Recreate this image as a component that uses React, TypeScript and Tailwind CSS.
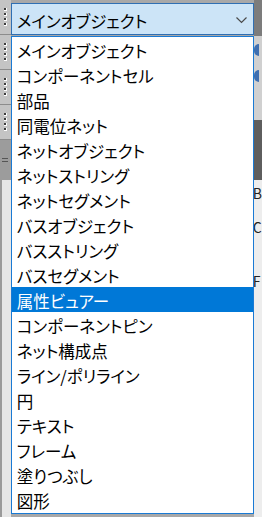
import React from "react";

const items = [
  "メインオブジェクト",
  "コンポーネントセル",
  "部品",
  "同電位ネット",
  "ネットオブジェクト",
  "ネットストリング",
  "ネットセグメント",
  "バスオブジェクト",
  "バスストリング",
  "バスセグメント",
  "属性ビュアー",
  "コンポーネントピン",
  "ネット構成点",
  "ライン/ポリライン",
  "円",
  "テキスト",
  "フレーム",
  "塗りつぶし",
  "図形",
];

const font = {
  fontFamily: '"Noto Sans CJK JP", "Noto Sans", sans-serif',
  fontFeatureSettings: '"palt"',
};

function Grip() {
  return (
    <div className="flex flex-col gap-[2px] items-center pt-[8px]">
      {[0, 1, 2, 3].map((i) => (
        <div key={i} className="w-[3px] h-[3px] bg-[#3c3c3c] border-r border-b border-white" />
      ))}
    </div>
  );
}

export default function App() {
  const selected = 10;
  return (
    <div className="w-[262px] h-[517px] bg-[#a8a8a8] flex overflow-hidden" style={font}>
      {/* left toolbar strip */}
      <div className="w-[11px] flex flex-col">
        <div className="h-[35px] bg-[#c4c4c4] border-b border-[#8c8c8c]"><Grip /></div>
        <div className="h-[35px] bg-[#c4c4c4] border-b border-[#8c8c8c]"><Grip /></div>
        <div className="h-[35px] bg-[#c4c4c4] border-b border-[#8c8c8c]"><Grip /></div>
        <div className="h-[35px] bg-[#c4c4c4] border-b border-[#8c8c8c]"><Grip /></div>
        <div className="h-[40px] bg-[#9c9c9c] flex flex-col items-center justify-center gap-[2px]">
          <div className="w-[6px] h-px bg-[#555]" />
          <div className="w-[6px] h-px bg-[#555]" />
        </div>
        <div className="flex-1 bg-[#e6e6e6] border-l-2 border-[#9a9a9a]" />
      </div>

      {/* combo + dropdown */}
      <div className="w-[246px] flex flex-col pt-[3px]">
        <div className="h-[32px] bg-[#cce4f7] border border-[#2f6fb3] flex items-center pl-[5px] pr-[6px]">
          <span className="flex-1 pt-[5px] text-[16.5px] text-black leading-none">メインオブジェクト</span>
          <svg width="11" height="7" viewBox="0 0 11 7" className="mt-[3px]">
            <path d="M0.5 0.5 L5.5 5.5 L10.5 0.5" fill="none" stroke="#4a4a4a" strokeWidth="1.2" />
          </svg>
        </div>
        <div className="mt-[1px] h-[478px] bg-white border border-[#1a7ad4] flex flex-col">
          {items.map((t, i) => (
            <div
              key={t}
              className={
                "h-[25px] flex items-center pl-[5px] pt-[4px] text-[16.5px] leading-none " +
                (i === selected ? "bg-[#0078d7] text-white" : "text-black")
              }
            >
              {t}
            </div>
          ))}
        </div>
      </div>

      {/* right background edge */}
      <div className="flex-1 flex flex-col">
        <div className="h-[36px] bg-[#7c7c7c]" />
        <div className="h-[84px] bg-[#d0d0d0] flex flex-col gap-[14px] pt-[8px]">
          <div className="w-[5px] h-[12px] rounded-l-full bg-[#3f6fb0]" />
          <div className="w-[5px] h-[12px] rounded-l-full bg-[#3f6fb0]" />
        </div>
        <div className="h-[60px] bg-[#5e5e5e]" />
        <div className="flex-1 bg-[#ededed] text-[14px] leading-none text-[#222] flex flex-col pt-[6px] gap-[20px] overflow-hidden">
          <span className="-ml-[1px]">B</span>
          <span className="-ml-[1px]">C</span>
          <span className="mt-[20px] -ml-[1px]">F</span>
        </div>
      </div>
    </div>
  );
}
